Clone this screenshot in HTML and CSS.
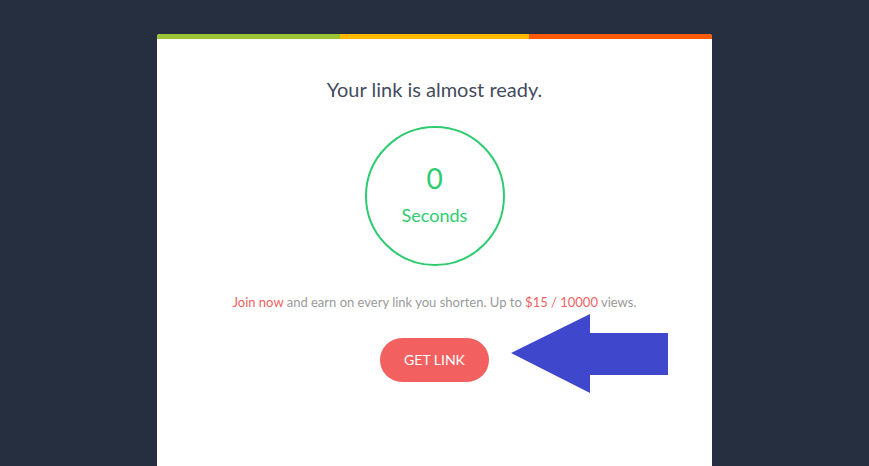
FILE: index.html
```html
<!DOCTYPE html>
<html lang="en">

<head>
    <meta charset="UTF-8">
    <meta name="viewport" content="width=device-width, initial-scale=1.0">
    <title>Your link is almost ready</title>
    <link rel="stylesheet" href="styles.css">
</head>

<body>
    <div class="box">
        <!-- Coloured strip on top of the box -->
        <div class="strip">
            <span class="strip-green"></span>
            <span class="strip-yellow"></span>
            <span class="strip-orange"></span>
        </div>

        <div class="box-body">
            <h3 class="title">Your link is almost ready.</h3>

            <div class="timer">
                <span class="timer-count">0</span>
                <span class="timer-label">Seconds</span>
            </div>

            <p class="promo"><a href="#" class="promo-link">Join now</a> and earn on every link you shorten. Up to <span class="promo-rate">$15 / 10000</span> views.</p>

            <div class="actions">
                <a href="#" class="btn-get">GET LINK</a>
                <svg class="arrow" width="160" height="82" viewBox="0 0 160 82">
                    <polygon points="1,40 80,1 80,20 158,20 158,62 80,62 80,80" fill="#3f48cc" />
                </svg>
            </div>
        </div>
    </div>
</body>

</html>
```

FILE: styles.css
```css
body {
    margin: 0;
    background-color: #252f3f;
    font-family: "Lato", "Noto Sans", sans-serif;
    height: 466px;
    overflow: hidden;
}

.box {
    width: 555px;
    margin: 34px auto 0;
    background-color: #ffffff;
    border-radius: 3px 3px 0 0;
    min-height: 432px;
    overflow: hidden;
}

.strip {
    display: flex;
    height: 5px;
}

.strip span {
    height: 5px;
}

.strip-green {
    width: 183px;
    background-color: #9ac434;
}

.strip-yellow {
    width: 189px;
    background-color: #ffb902;
}

.strip-orange {
    flex: 1;
    background-color: #ff5a06;
}

.box-body {
    display: flex;
    flex-direction: column;
    align-items: center;
    padding-top: 38px;
}

.title {
    margin: 0;
    font-size: 20px;
    font-weight: normal;
    color: #454b5e;
    line-height: 24px;
}

.timer {
    box-sizing: border-box;
    margin-top: 25px;
    width: 140px;
    height: 140px;
    padding-bottom: 3px;
    flex-shrink: 0;
    border: 2px solid #2ecc71;
    border-radius: 50%;
    display: flex;
    flex-direction: column;
    align-items: center;
    justify-content: center;
    color: #2ecc71;
}

.timer-count {
    font-size: 28px;
    line-height: 32px;
    margin-top: -2px;
}

.timer-label {
    font-size: 18px;
    line-height: 20px;
    margin-top: 11px;
}

.promo {
    margin: 28px 0 0;
    font-size: 13px;
    line-height: 16px;
    color: #9a9a9a;
}

.promo-link {
    color: #f0625f;
    text-decoration: none;
}

.promo-rate {
    color: #f0625f;
}

.actions {
    position: relative;
    margin-top: 28px;
}

.btn-get {
    display: block;
    width: 109px;
    height: 44px;
    line-height: 44px;
    border-radius: 22px;
    background-color: #f26060;
    color: #ffffff;
    text-align: center;
    font-size: 14px;
    text-decoration: none;
}

/* Pointer drawn over the page, next to the button */
.arrow {
    position: absolute;
    left: 130px;
    top: -25px;
}
```
